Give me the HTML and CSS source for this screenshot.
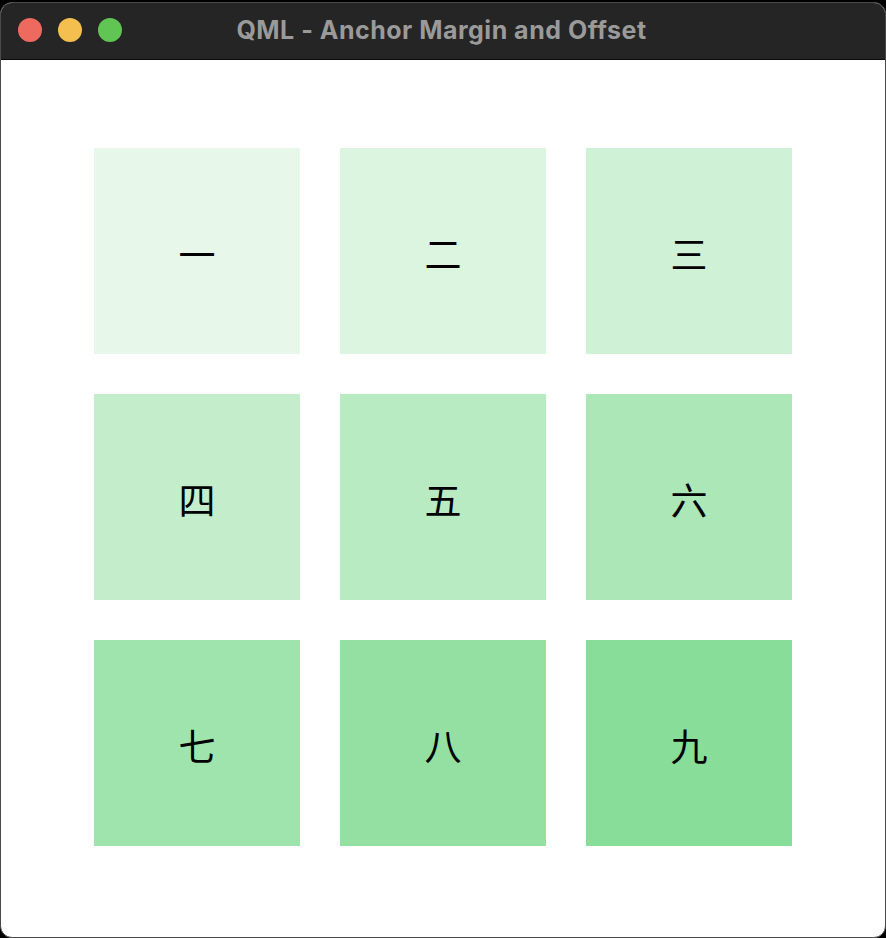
FILE: index.html
```html
<!DOCTYPE html>
<html lang="zh">
<head>
<meta charset="utf-8">
<title>QML - Anchor Margin and Offset</title>
<link rel="stylesheet" href="styles.css">
</head>
<body>
<div class="window">
  <div class="titlebar">
    <div class="lights">
      <span class="light red"></span>
      <span class="light yellow"></span>
      <span class="light green"></span>
    </div>
    <div class="title">QML - Anchor Margin and Offset</div>
  </div>
  <div class="content">
    <div class="grid">
      <div class="cell c1">一</div>
      <div class="cell c2">二</div>
      <div class="cell c3">三</div>
      <div class="cell c4">四</div>
      <div class="cell c5">五</div>
      <div class="cell c6">六</div>
      <div class="cell c7">七</div>
      <div class="cell c8">八</div>
      <div class="cell c9">九</div>
    </div>
  </div>
</div>
</body>
</html>
```
FILE: styles.css
```css
html, body {
  margin: 0;
  padding: 0;
  background: #000;
  width: 886px;
  height: 938px;
  overflow: hidden;
}
.window {
  box-sizing: border-box;
  margin-top: 2px;
  width: 886px;
  height: 936px;
  border-radius: 12px;
  border: 1px solid #4a4a4a;
  overflow: hidden;
  display: flex;
  flex-direction: column;
  background: #fff;
}
.titlebar {
  position: relative;
  height: 56px;
  background: #252525;
  border-bottom: 1px solid #0a0a0a;
  display: flex;
  align-items: center;
  justify-content: center;
}
.lights {
  position: absolute;
  left: 17px;
  top: 15px;
  display: flex;
  gap: 16px;
}
.light {
  width: 24px;
  height: 24px;
  border-radius: 50%;
}
.red { background: #ee6a5f; }
.yellow { background: #f5bf4f; }
.green { background: #61c554; }
.title {
  font-family: Inter, "Liberation Sans", sans-serif;
  font-weight: 700;
  font-size: 25px;
  letter-spacing: 0.5px;
  color: #9a9a9a;
  margin-top: -2px;
  margin-left: -3px;
}
.content {
  flex: 1;
  padding: 88px 0 0 93px;
}
.grid {
  display: grid;
  grid-template-columns: repeat(3, 206px);
  grid-auto-rows: 206px;
  gap: 40px;
}
.cell {
  display: flex;
  align-items: center;
  justify-content: center;
  font-family: "Noto Sans CJK SC", "Noto Sans CJK JP", sans-serif;
  font-size: 37px;
  color: #000;
  padding-top: 3px;
  box-sizing: border-box;
}
.c1 { background: #e7f8ea; }
.c2 { background: #dbf5e0; }
.c3 { background: #cff1d6; }
.c4 { background: #c4eecb; }
.c5 { background: #b8ebc1; }
.c6 { background: #ace7b7; }
.c7 { background: #a0e4ad; }
.c8 { background: #94e0a2; }
.c9 { background: #88dd98; }
```
